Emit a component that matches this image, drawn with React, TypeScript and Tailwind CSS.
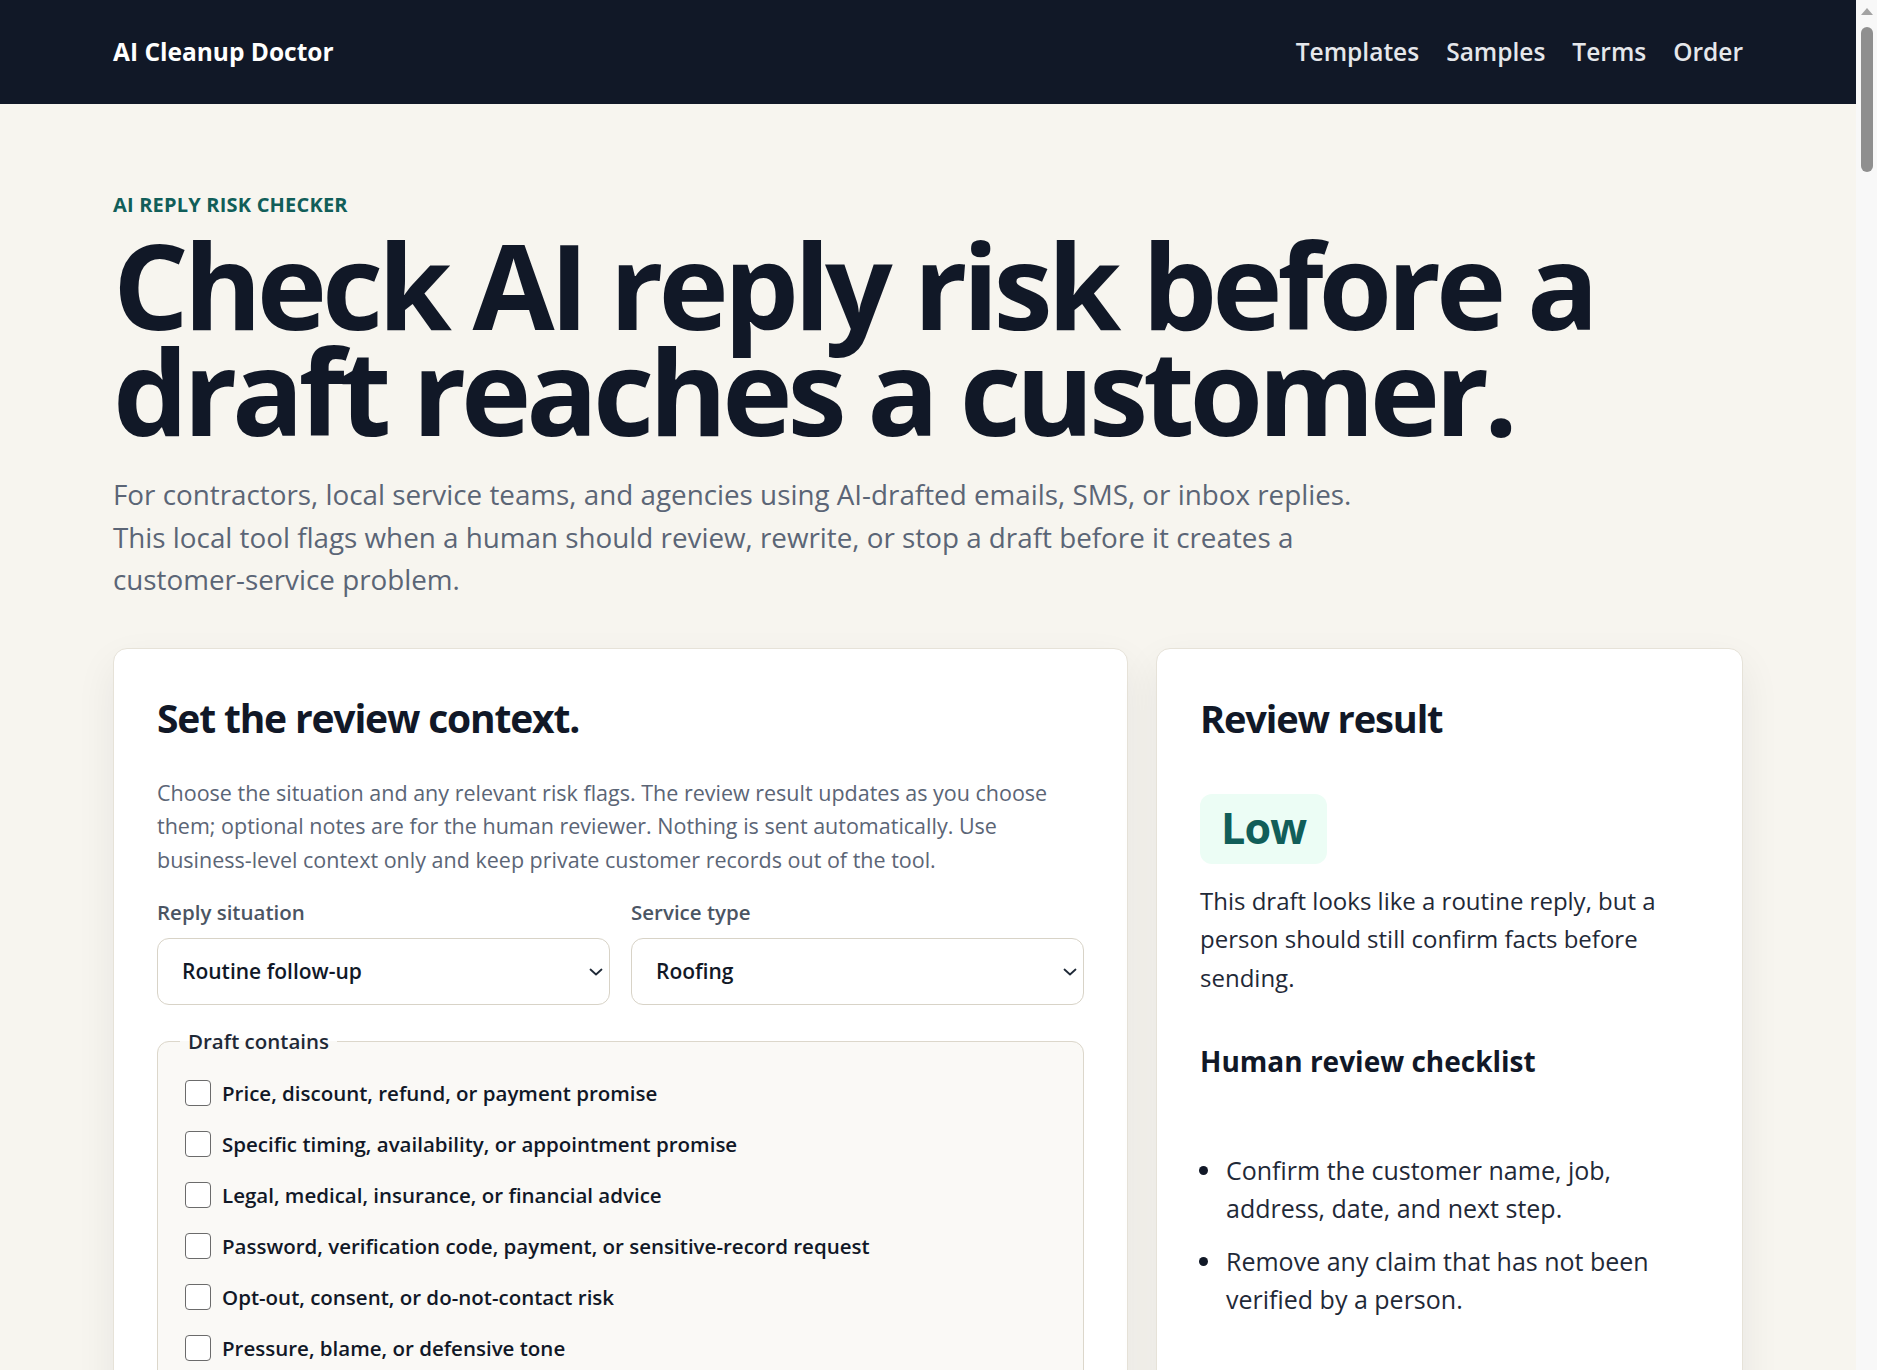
import type { ReactNode } from "react";

const checks = [
  "Price, discount, refund, or payment promise",
  "Specific timing, availability, or appointment promise",
  "Legal, medical, insurance, or financial advice",
  "Password, verification code, payment, or sensitive-record request",
  "Opt-out, consent, or do-not-contact risk",
  "Pressure, blame, or defensive tone",
  "Competitor, review, or public complaint mention",
];

const checklist = [
  "Confirm the customer name, job, address, date, and next step.",
  "Remove any claim that has not been verified by a person.",
];

function Chevron() {
  return (
    <svg
      aria-hidden
      viewBox="0 0 14 8"
      className="pointer-events-none absolute right-[7px] top-1/2 h-[8px] w-[14px] -translate-y-1/2 text-[#1f2937]"
      fill="none"
      stroke="currentColor"
      strokeWidth="1.8"
      strokeLinecap="round"
      strokeLinejoin="round"
    >
      <polyline points="1.5,1.5 7,6.5 12.5,1.5" />
    </svg>
  );
}

function SelectField({ label, value }: { label: string; value: string }) {
  return (
    <label className="flex flex-col">
      <span className="text-[20.5px] font-semibold leading-[28px] text-[#4b5563]">{label}</span>
      <span className="relative mt-[12px] block">
        <select
          defaultValue={value}
          className="h-[67px] w-full appearance-none rounded-[12px] border border-[#d8d3c7] bg-white pl-[24px] pr-[30px] text-[21px] font-semibold text-[#111827] outline-none"
        >
          <option>{value}</option>
        </select>
        <Chevron />
      </span>
    </label>
  );
}

function Card({ children }: { children: ReactNode }) {
  return (
    <section className="rounded-[14px] border border-[#e6e2d8] bg-white px-[43px] pb-[40px] pt-[45px] shadow-[0_16px_40px_rgba(17,24,39,0.07)]">
      {children}
    </section>
  );
}

// stand-in for the classic scrollbar visible in the screenshot
function ScrollTrack() {
  return (
    <div aria-hidden className="fixed right-0 top-0 flex h-screen w-[21px] flex-col items-center bg-[#f8f8f8]">
      <span className="mt-[8px] h-0 w-0 border-x-[6px] border-b-[7px] border-x-transparent border-b-[#a3a3a3]" />
      <span className="mt-[12px] h-[145px] w-[12px] rounded-full bg-[#8f8f8f]" />
    </div>
  );
}

export default function App() {
  return (
    <div className="min-h-screen bg-[#f7f5ef] pr-[21px] font-['Open_Sans','Noto_Sans',sans-serif] text-[#111827]">
      <header className="h-[104px] bg-[#111827]">
        <div className="mx-auto flex h-full max-w-[1630px] items-center justify-between">
          <a href="#" className="text-[24.5px] font-bold text-white">
            AI Cleanup Doctor
          </a>
          <nav className="flex items-center gap-[27px] text-[24.5px] font-semibold text-[#e5e7eb]">
            <a href="#">Templates</a>
            <a href="#">Samples</a>
            <a href="#">Terms</a>
            <a href="#">Order</a>
          </nav>
        </div>
      </header>

      <main className="mx-auto max-w-[1630px] pt-[86px]">
        <p className="text-[20px] font-bold uppercase leading-[30px] tracking-[0.01em] text-[#115e59]">
          AI reply risk checker
        </p>
        <h1 className="mt-[12px] text-[119px] font-bold leading-[105.6px] tracking-[-0.043em] text-[#111827]">
          Check AI reply risk before a draft reaches a customer.
        </h1>
        <p className="mt-[30px] max-w-[1265px] text-[27.8px] leading-[42.5px] text-[#5b6576]">
          For contractors, local service teams, and agencies using AI-drafted emails, SMS, or inbox replies. This
          local tool flags when a human should review, rewrite, or stop a draft before it creates a customer-service
          problem.
        </p>

        <div className="mt-[47px] grid grid-cols-[minmax(0,1fr)_587px] gap-[28px]">
          <Card>
            <h2 className="text-[39px] font-bold leading-[48px] tracking-[-0.03em] text-[#111827]">
              Set the review context.
            </h2>
            <p className="mt-[34px] text-[21.5px] leading-[33.5px] text-[#5b6576]">
              Choose the situation and any relevant risk flags. The review result updates as you choose them; optional
              notes are for the human reviewer. Nothing is sent automatically. Use business-level context only and keep
              private customer records out of the tool.
            </p>
            <div className="mt-[22px] grid grid-cols-2 gap-[21px]">
              <SelectField label="Reply situation" value="Routine follow-up" />
              <SelectField label="Service type" value="Roofing" />
            </div>
            <fieldset className="mt-[22px] rounded-[12px] border border-[#dcd7cb] bg-[#faf9f6] px-[22px] pb-[28px] pt-[22px]">
              <legend className="px-[8px] text-[20.5px] font-semibold leading-[28px] text-[#1f2937]">
                Draft contains
              </legend>
              <div className="flex flex-col gap-[19px] pl-[5px]">
                {checks.map((c) => (
                  <label key={c} className="flex items-center gap-[11px]">
                    <span className="h-[26px] w-[26px] shrink-0 rounded-[4px] border-[1.5px] border-[#6b6b6b] bg-white" />
                    <span className="text-[20.5px] font-semibold leading-[32px] text-[#111827]">{c}</span>
                  </label>
                ))}
              </div>
            </fieldset>
          </Card>

          <Card>
            <h2 className="text-[38px] font-bold leading-[48px] tracking-[-0.03em] text-[#111827]">Review result</h2>
            <div className="mt-[52px] inline-flex h-[70px] items-center rounded-[12px] bg-[#ecfdf5] px-[21px]">
              <span className="text-[43px] font-bold tracking-[-0.02em] text-[#115e59]">Low</span>
            </div>
            <p className="mt-[18px] text-[24px] leading-[38.5px] text-[#1f2937]">
              This draft looks like a routine reply, but a person should still confirm facts before sending.
            </p>
            <h3 className="mt-[46px] text-[28px] font-bold leading-[36px] text-[#111827]">Human review checklist</h3>
            <ul className="mt-[73px] flex list-disc flex-col gap-[16px] pl-[24px] marker:text-[#111827]">
              {checklist.map((item) => (
                <li key={item} className="pl-[2px] text-[25px] leading-[37.5px] text-[#1f2937]">
                  {item}
                </li>
              ))}
            </ul>
          </Card>
        </div>
      </main>
      <ScrollTrack />
    </div>
  );
}
